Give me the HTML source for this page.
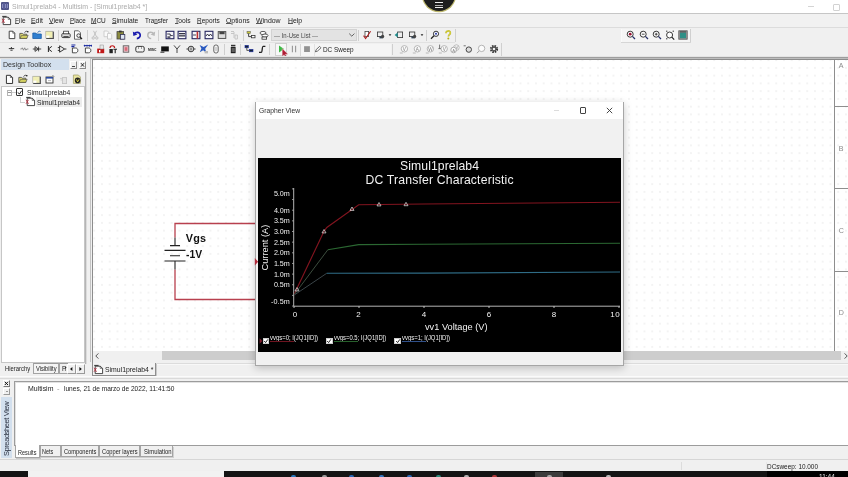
<!DOCTYPE html>
<html>
<head>
<meta charset="utf-8">
<title>Simul1prelab4 - Multisim</title>
<style>
html,body{margin:0;padding:0;overflow:hidden;}
body{width:848px;height:477px;overflow:hidden;background:#f0f0f0;position:relative;font-family:"Liberation Sans","DejaVu Sans",sans-serif;color:#222;}
.a{position:absolute;}
.t{position:absolute;white-space:nowrap;line-height:1;}
.menu u{text-decoration:underline;text-decoration-thickness:0.5px;text-underline-offset:0.2px;text-decoration-color:#555;}
.tab{position:absolute;border:1px solid #a4a4a4;border-top:none;background:#f0f0f0;box-sizing:border-box;}
svg{overflow:visible;}
#root{position:absolute;left:0;top:0;width:848px;height:477px;overflow:hidden;will-change:transform;}
</style>
</head>
<body>
<div id="root">
<!-- title bar -->
<div class="a" style="left:0px;top:0px;width:848px;height:13px;background:#fff;"></div>
<div class="a" style="left:0px;top:13px;width:848px;height:1px;background:#c6c6c6;"></div>
<div class="a" style="left:1.2px;top:2.3px;width:8.2px;height:7.8px;background:#4f5488;border-radius:1px;"></div>
<div class="a" style="left:2.2px;top:4.2px;width:6.2px;height:3.4px;background:#8a8fc0;"></div>
<div class="a" style="left:3.4px;top:3.4px;width:1.2px;height:5.4px;background:#5a5f98;"></div>
<div class="a" style="left:6px;top:3.4px;width:1.2px;height:5.4px;background:#5a5f98;"></div>
<div class="t" style="left:12.3px;top:3px;font-size:7.5px;color:#ababab;transform:scaleX(0.9267);transform-origin:0 50%;">Simul1prelab4 - Multisim - [Simul1prelab4 *]</div>
<div class="a" style="left:422.8px;top:-21.5px;width:32px;height:32px;border-radius:50%;background:#1e1e1e;box-shadow:0 0 0 1.2px #bdb76e;"></div>
<div class="a" style="left:434.5px;top:2.2px;width:8.8px;height:1px;background:#ececec;"></div>
<div class="a" style="left:434.5px;top:4.5px;width:8.8px;height:1px;background:#b0b0b0;"></div>
<div class="a" style="left:434.5px;top:6.8px;width:8.8px;height:1px;background:#ececec;"></div>
<div class="a" style="left:808px;top:6px;width:6px;height:1px;background:#d4d4d4;"></div>
<div class="a" style="left:833px;top:4px;width:5px;height:5px;border:1px solid #d2d2d2;border-radius:1px;"></div>
<!-- menu bar -->
<div class="a" style="left:0px;top:14px;width:848px;height:13px;background:#f1f1f1;"></div>
<div class="a" style="left:0px;top:27px;width:848px;height:1px;background:#dcdcdc;"></div>
<svg class="a" style="left:1px;top:15px;" width="11" height="11" viewBox="0 0 11 11"><path d="M2.2 2.2h5l2.4 2.2v5.2h-7.4z" fill="#fff" stroke="#333" stroke-width="0.9"/><path d="M7.2 2.2v2.2h2.4" fill="none" stroke="#333" stroke-width="0.6"/><path d="M1 3.8l2.6 4M3.6 3.8l-2.6 4" stroke="#b82838" stroke-width="0.8"/><path d="M1.2 1.4h4.4" stroke="#333" stroke-width="1"/></svg>
<div class="t menu" style="left:14.5px;top:17px;font-size:7.5px;color:#1a1a1a;transform:scaleX(0.8682);transform-origin:0 50%;"><u>F</u>ile</div>
<div class="t menu" style="left:31.2px;top:17px;font-size:7.5px;color:#1a1a1a;transform:scaleX(0.9121);transform-origin:0 50%;"><u>E</u>dit</div>
<div class="t menu" style="left:49px;top:17px;font-size:7.5px;color:#1a1a1a;transform:scaleX(0.9178);transform-origin:0 50%;"><u>V</u>iew</div>
<div class="t menu" style="left:69.8px;top:17px;font-size:7.5px;color:#1a1a1a;transform:scaleX(0.8366);transform-origin:0 50%;"><u>P</u>lace</div>
<div class="t menu" style="left:91.4px;top:17px;font-size:7.5px;color:#1a1a1a;transform:scaleX(0.8658);transform-origin:0 50%;"><u>M</u>CU</div>
<div class="t menu" style="left:112.2px;top:17px;font-size:7.5px;color:#1a1a1a;transform:scaleX(0.9011);transform-origin:0 50%;"><u>S</u>imulate</div>
<div class="t menu" style="left:145.1px;top:17px;font-size:7.5px;color:#1a1a1a;transform:scaleX(0.8353);transform-origin:0 50%;">Tra<u>n</u>sfer</div>
<div class="t menu" style="left:174.8px;top:17px;font-size:7.5px;color:#1a1a1a;transform:scaleX(0.8906);transform-origin:0 50%;"><u>T</u>ools</div>
<div class="t menu" style="left:197.4px;top:17px;font-size:7.5px;color:#1a1a1a;transform:scaleX(0.8642);transform-origin:0 50%;"><u>R</u>eports</div>
<div class="t menu" style="left:226.4px;top:17px;font-size:7.5px;color:#1a1a1a;transform:scaleX(0.9165);transform-origin:0 50%;"><u>O</u>ptions</div>
<div class="t menu" style="left:256.2px;top:17px;font-size:7.5px;color:#1a1a1a;transform:scaleX(0.9218);transform-origin:0 50%;"><u>W</u>indow</div>
<div class="t menu" style="left:287.6px;top:17px;font-size:7.5px;color:#1a1a1a;transform:scaleX(0.9134);transform-origin:0 50%;"><u>H</u>elp</div>
<!-- toolbars -->
<div class="a" style="left:454.5px;top:29px;width:1px;height:13px;background:#d0d0d0;"></div>
<div class="a" style="left:620.5px;top:28.5px;width:70px;height:14px;background:#f5f5f5;"></div>
<div class="a" style="left:620.5px;top:29px;width:1px;height:13px;background:#fafafa;"></div>
<div class="a" style="left:690px;top:29px;width:1px;height:13px;background:#d0d0d0;"></div>
<div class="a" style="left:620.5px;top:42px;width:70.5px;height:1px;background:#d6d6d6;"></div>
<div class="a" style="left:0px;top:42px;width:455px;height:1px;background:#e2e2e2;"></div>
<svg class="a" style="left:6.6px;top:30.0px;" width="10" height="10" viewBox="0 0 10 10"><path d="M2.2 1.2h3.6l2 2v5.4h-5.6z" fill="#fff" stroke="#333" stroke-width="0.9"/><path d="M5.8 1.2v2h2" fill="none" stroke="#333" stroke-width="0.6"/></svg>
<svg class="a" style="left:19.0px;top:30.0px;" width="10" height="10" viewBox="0 0 10 10"><path d="M0.8 3.4h2.6l.8.8h3.6v4.3h-7z" fill="#e2dc78" stroke="#444" stroke-width="0.8"/><path d="M1 8.4l1.6-3h6.6l-1.6 3z" fill="#d4d060" stroke="#444" stroke-width="0.6"/><path d="M5.6 2.6c.6-1.2 1.8-1.6 2.8-1.2" fill="none" stroke="#222" stroke-width="0.8"/><circle cx="8.8" cy="1.8" r="0.8" fill="#111"/></svg>
<svg class="a" style="left:32.0px;top:30.0px;" width="10" height="10" viewBox="0 0 10 10"><path d="M0.8 3h3l1 1h4.5v4.5h-8.5z" fill="#2f7fd0" stroke="#1d5fa8" stroke-width="0.8"/><path d="M5.5 2.5l2-1.5 1 1" fill="none" stroke="#1d5fa8" stroke-width="0.8"/></svg>
<svg class="a" style="left:45.0px;top:30.0px;" width="10" height="10" viewBox="0 0 10 10"><rect x="1.2" y="1.6" width="7.6" height="7.4" fill="#333"/><rect x="0.8" y="1.2" width="7" height="6.8" fill="#f1efb4" stroke="#999" stroke-width="0.5"/><rect x="1.4" y="5.6" width="3" height="2.2" fill="#fff"/></svg>
<svg class="a" style="left:61.0px;top:30.0px;" width="10" height="10" viewBox="0 0 10 10"><rect x="0.8" y="3.6" width="8.4" height="4" rx="1" fill="#ddd" stroke="#333" stroke-width="0.9"/><rect x="2.6" y="1.2" width="4.8" height="2.6" fill="#fff" stroke="#333" stroke-width="0.8"/><rect x="2.4" y="6.2" width="5.2" height="1.2" fill="#333"/></svg>
<svg class="a" style="left:73.0px;top:30.0px;" width="10" height="10" viewBox="0 0 10 10"><path d="M1.5 0.8h4l2 2v6.4h-6z" fill="#fff" stroke="#444" stroke-width="0.8"/><circle cx="5.6" cy="5.6" r="1.8" fill="#eee" stroke="#222" stroke-width="0.8"/><path d="M7 7l2 2" stroke="#222" stroke-width="1.2"/></svg>
<svg class="a" style="left:90.0px;top:30.0px;" width="10" height="10" viewBox="0 0 10 10"><path d="M3.5 0.8l3 6M6.5 0.8l-3 6" stroke="#b8b8b8" stroke-width="0.8" fill="none"/><circle cx="3.2" cy="8" r="1.2" fill="none" stroke="#b8b8b8" stroke-width="0.8"/><circle cx="6.8" cy="8" r="1.2" fill="none" stroke="#b8b8b8" stroke-width="0.8"/></svg>
<svg class="a" style="left:103.0px;top:30.0px;" width="10" height="10" viewBox="0 0 10 10"><path d="M1 1h3.5l1.2 1.2v4.5h-4.7z" fill="#fafafa" stroke="#c4c4c4" stroke-width="0.8"/><path d="M4.5 3.4h3l1.2 1.2v4.4h-4.2z" fill="#fafafa" stroke="#c4c4c4" stroke-width="0.8"/></svg>
<svg class="a" style="left:116.0px;top:30.0px;" width="10" height="10" viewBox="0 0 10 10"><rect x="1" y="1.6" width="6.6" height="7.4" fill="#8a8a3e" stroke="#444" stroke-width="0.8"/><rect x="3" y="0.6" width="2.6" height="1.8" fill="#333"/><rect x="4.4" y="4.4" width="4.4" height="4.8" fill="#dfe6f4" stroke="#335" stroke-width="0.8"/></svg>
<svg class="a" style="left:132.0px;top:30.0px;" width="10" height="10" viewBox="0 0 10 10"><path d="M2.2 4.2c1.2-2.6 5.6-2.6 6 .6c.3 2.2-1.4 3.6-3.4 3.8" fill="none" stroke="#1b1cae" stroke-width="1.7"/><path d="M0.8 1.6l0.6 4.4 4-1.4z" fill="#1b1cae"/></svg>
<svg class="a" style="left:146.0px;top:30.0px;" width="10" height="10" viewBox="0 0 10 10"><path d="M7.8 4.2c-1.2-2.6-5.6-2.6-6 .6c-.3 2.2 1.4 3.6 3.4 3.8" fill="none" stroke="#b8b8b8" stroke-width="1.5"/><path d="M9.2 1.6l-0.6 4.4-4-1.4z" fill="#b8b8b8"/></svg>
<svg class="a" style="left:165.0px;top:30.0px;" width="10" height="10" viewBox="0 0 10 10"><rect x="1.1" y="1.3" width="7.8" height="7.4" fill="#f6f6fb" stroke="#26265f" stroke-width="1.1"/><path d="M2.2 4h3v1.6h2.6" stroke="#223" stroke-width="0.9" fill="none"/><rect x="2.4" y="6.4" width="3" height="1.4" fill="#334"/></svg>
<svg class="a" style="left:177.0px;top:30.0px;" width="10" height="10" viewBox="0 0 10 10"><rect x="1.1" y="1.3" width="7.8" height="7.4" fill="#f6f6fb" stroke="#26265f" stroke-width="1.1"/><rect x="2" y="3" width="6" height="1.3" fill="#334"/><rect x="2" y="5.2" width="6" height="1.3" fill="#334"/></svg>
<svg class="a" style="left:191.0px;top:30.0px;" width="10" height="10" viewBox="0 0 10 10"><rect x="1.1" y="1.3" width="7.8" height="7.4" fill="#f6f6fb" stroke="#26265f" stroke-width="1.1"/><rect x="5.6" y="1.6" width="1.6" height="7" fill="#c03030"/><path d="M2 5h3" stroke="#334" stroke-width="0.9"/></svg>
<svg class="a" style="left:204.0px;top:30.0px;" width="10" height="10" viewBox="0 0 10 10"><rect x="1.1" y="1.3" width="7.8" height="7.4" fill="#f6f6fb" stroke="#26265f" stroke-width="1.1"/><path d="M2 6l1.5-2 1.5 2 1.5-2 1.5 2" stroke="#223" stroke-width="0.9" fill="none"/></svg>
<svg class="a" style="left:217.0px;top:30.0px;" width="10" height="10" viewBox="0 0 10 10"><rect x="1.2" y="1.6" width="7.6" height="6.8" fill="#ddd" stroke="#444" stroke-width="0.9"/><rect x="2.4" y="2" width="5.2" height="2.2" fill="#444"/></svg>
<svg class="a" style="left:229.0px;top:30.0px;" width="10" height="10" viewBox="0 0 10 10"><path d="M2 1.5h3M2 3.5h3M5 2v6M6 5h2.4v4h-2.4z" stroke="#c2c2c2" stroke-width="0.9" fill="none"/></svg>
<svg class="a" style="left:246.0px;top:30.0px;" width="10" height="10" viewBox="0 0 10 10"><rect x="1" y="1.4" width="3.4" height="2.2" fill="#c8c83a" stroke="#555" stroke-width="0.5"/><path d="M2.6 3.6v3h3" stroke="#333" stroke-width="0.9" fill="none"/><rect x="5.4" y="5.4" width="3.6" height="2.4" fill="#fff" stroke="#333" stroke-width="0.8"/></svg>
<svg class="a" style="left:259.0px;top:30.0px;" width="10" height="10" viewBox="0 0 10 10"><ellipse cx="4" cy="3" rx="3" ry="1.6" fill="#fff" stroke="#333" stroke-width="0.8"/><ellipse cx="6" cy="5.6" rx="3" ry="1.6" fill="#fff" stroke="#333" stroke-width="0.8"/><rect x="3" y="7" width="4.6" height="2.2" fill="#fff" stroke="#333" stroke-width="0.8"/></svg>
<svg class="a" style="left:361.7px;top:30.0px;" width="10" height="10" viewBox="0 0 10 10"><rect x="3" y="1.4" width="3.6" height="5" fill="#fff" stroke="#444" stroke-width="0.8"/><path d="M1.6 5.6l2 3 5-7.4" stroke="#b02020" stroke-width="1.1" fill="none"/></svg>
<svg class="a" style="left:375.5px;top:30.0px;" width="10" height="10" viewBox="0 0 10 10"><rect x="1.4" y="2" width="5.4" height="4.6" fill="#eee" stroke="#333" stroke-width="0.8"/><path d="M3.4 6.2l3.8 0 0 2.2-3.8 0z" fill="#345"/><circle cx="6.6" cy="6.4" r="1.6" fill="#444"/></svg>
<svg class="a" style="left:384.5px;top:30.0px;" width="10" height="10" viewBox="0 0 10 10"><path d="M3.6 4.2h2.8l-1.4 1.8z" fill="#222"/></svg>
<svg class="a" style="left:394.0px;top:30.0px;" width="10" height="10" viewBox="0 0 10 10"><rect x="3.6" y="2" width="5" height="5.6" fill="#eee" stroke="#333" stroke-width="0.8"/><path d="M0.6 5l3-2.4v4.8z" fill="#1f8f8f"/></svg>
<svg class="a" style="left:408.0px;top:30.0px;" width="10" height="10" viewBox="0 0 10 10"><rect x="1.4" y="2" width="5.4" height="4.6" fill="#eee" stroke="#333" stroke-width="0.8"/><path d="M3.4 6.2l3.8 0 0 2.2-3.8 0z" fill="#345"/><circle cx="6.6" cy="6.4" r="1.6" fill="#444"/></svg>
<svg class="a" style="left:416.5px;top:30.0px;" width="10" height="10" viewBox="0 0 10 10"><path d="M3.6 4.2h2.8l-1.4 1.8z" fill="#222"/></svg>
<svg class="a" style="left:430.0px;top:30.0px;" width="10" height="10" viewBox="0 0 10 10"><circle cx="6" cy="3.8" r="2.6" fill="#f4f6ff" stroke="#222" stroke-width="0.9"/><circle cx="6" cy="3.8" r="1" fill="#2a3aa0"/><path d="M4 5.8l-3 3" stroke="#222" stroke-width="1.3"/></svg>
<svg class="a" style="left:443.0px;top:30.0px;" width="10" height="10" viewBox="0 0 10 10"><path d="M3 3.2c0-3 4.4-3 4.4-.2c0 1.6-2 1.8-2 3.4" fill="none" stroke="#b7b21a" stroke-width="1.6"/><path d="M3 3.2c0-3 4.4-3 4.4-.2c0 1.6-2 1.8-2 3.4" fill="none" stroke="#f0ea60" stroke-width="0.6"/><circle cx="5.3" cy="8.4" r="1" fill="#b7b21a"/></svg>
<svg class="a" style="left:625.8px;top:30.0px;" width="10" height="10" viewBox="0 0 10 10"><circle cx="4.2" cy="4.2" r="3" fill="#fff" stroke="#222" stroke-width="0.9"/><path d="M6.4 6.4l2.6 2.6" stroke="#26306a" stroke-width="1.3"/><circle cx="4.2" cy="4.2" r="1.4" fill="#9a1436"/></svg>
<svg class="a" style="left:638.8px;top:30.0px;" width="10" height="10" viewBox="0 0 10 10"><circle cx="4.2" cy="4.2" r="3" fill="#fff" stroke="#222" stroke-width="0.9"/><path d="M6.4 6.4l2.6 2.6" stroke="#26306a" stroke-width="1.3"/><path d="M2.8 4.2h2.8" stroke="#222" stroke-width="0.8"/></svg>
<svg class="a" style="left:651.8px;top:30.0px;" width="10" height="10" viewBox="0 0 10 10"><circle cx="4.2" cy="4.2" r="3" fill="#fff" stroke="#222" stroke-width="0.9"/><path d="M6.4 6.4l2.6 2.6" stroke="#26306a" stroke-width="1.3"/><path d="M2.8 4.2h2.8M4.2 2.8v2.8" stroke="#222" stroke-width="0.8"/></svg>
<svg class="a" style="left:664.8px;top:30.0px;" width="10" height="10" viewBox="0 0 10 10"><circle cx="4.6" cy="5" r="3" fill="#fff" stroke="#222" stroke-width="0.9"/><path d="M6.8 7.2l2.4 2.4" stroke="#222" stroke-width="1.2"/><path d="M1 1.2h1.4M7.6 1.2h1.4M1 8.8h1.4" stroke="#222" stroke-width="0.9"/></svg>
<svg class="a" style="left:677.8px;top:30.0px;" width="10" height="10" viewBox="0 0 10 10"><rect x="0.8" y="0.8" width="8.4" height="8.4" fill="#9a9a9a" stroke="#555" stroke-width="0.8"/><rect x="2" y="2.6" width="6" height="5.6" fill="#2f8f86"/><rect x="2" y="1.4" width="6" height="1" fill="#444"/></svg>
<div class="a" style="left:58px;top:30px;width:1px;height:11px;background:#cfcfcf;"></div>
<div class="a" style="left:87px;top:30px;width:1px;height:11px;background:#cfcfcf;"></div>
<div class="a" style="left:157.5px;top:30px;width:1px;height:11px;background:#cfcfcf;"></div>
<div class="a" style="left:243px;top:30px;width:1px;height:11px;background:#cfcfcf;"></div>
<div class="a" style="left:358px;top:30px;width:1px;height:11px;background:#cfcfcf;"></div>
<div class="a" style="left:425.5px;top:30px;width:1px;height:11px;background:#cfcfcf;"></div>
<div class="a" style="left:271px;top:29px;width:86px;height:12px;box-sizing:border-box;background:#e3e3e3;border:1px solid #d2d2d2;"></div>
<div class="t" style="left:274px;top:33px;font-size:6.8px;color:#484848;transform:scaleX(0.8828);transform-origin:0 50%;">--- In-Use List ---</div>
<svg class="a" style="left:348px;top:32px;" width="8" height="6" viewBox="0 0 8 6"><path d="M1.2 1.6l2.6 2.6 2.6-2.6" fill="none" stroke="#444" stroke-width="0.8"/></svg>
<div class="a" style="left:300px;top:43.5px;width:91px;height:12.5px;background:#f5f5f5;"></div>
<div class="a" style="left:300px;top:43.5px;width:1px;height:12.5px;background:#d6d6d6;"></div>
<div class="a" style="left:313.5px;top:43.5px;width:1px;height:12.5px;background:#e2e2e2;"></div>
<svg class="a" style="left:6.0px;top:44.0px;" width="10" height="10" viewBox="0 0 10 10"><path d="M5.4 3v1.6M2.8 4.6h5.4M4.4 6.2h2.2" stroke="#222" stroke-width="0.9"/></svg>
<svg class="a" style="left:19.0px;top:44.0px;" width="10" height="10" viewBox="0 0 10 10"><path d="M1.4 5h1.2l.7-1.2 1.2 2.4 1.2-2.4 1.2 2.4 .9-1.2h1.6" stroke="#666" stroke-width="0.7" fill="none"/></svg>
<svg class="a" style="left:32.0px;top:44.0px;" width="10" height="10" viewBox="0 0 10 10"><path d="M0.8 5h8.4M3 2.6v4.8l3.4-2.4zM6.6 2.6v4.8" stroke="#222" stroke-width="0.8" fill="none"/></svg>
<svg class="a" style="left:45.0px;top:44.0px;" width="10" height="10" viewBox="0 0 10 10"><path d="M3.4 2v6M3.4 5l3.4-2.6M3.4 5l3.4 2.6" stroke="#222" stroke-width="1" fill="none"/></svg>
<svg class="a" style="left:57.0px;top:44.0px;" width="10" height="10" viewBox="0 0 10 10"><path d="M2.6 1.8v6.4l5-3.2zM0.8 3.6h1.8M0.8 6.4h1.8M7.6 5h1.8" stroke="#222" stroke-width="0.9" fill="none"/></svg>
<svg class="a" style="left:70.0px;top:44.0px;" width="10" height="10" viewBox="0 0 10 10"><path d="M1.4 1h4M1.4 2.6h3" stroke="#1a2aa0" stroke-width="1.1"/><path d="M2.4 4h3.2c3 0 3 4.8 0 4.8h-3.2z" fill="#fff" stroke="#222" stroke-width="0.8"/></svg>
<svg class="a" style="left:83.0px;top:44.0px;" width="10" height="10" viewBox="0 0 10 10"><path d="M0.8 1.6h8M1.6 0.8v1.8M4 0.8v1.8M6.4 0.8v1.8M8.4 0.8v1.8" stroke="#1a2aa0" stroke-width="1"/><path d="M2.4 4h3.2c3 0 3 4.8 0 4.8h-3.2z" fill="#fff" stroke="#222" stroke-width="0.8"/></svg>
<svg class="a" style="left:96.0px;top:44.0px;" width="10" height="10" viewBox="0 0 10 10"><rect x="1.2" y="4.6" width="7" height="4.6" fill="#c01818"/><rect x="4" y="1" width="3.4" height="4" fill="#e8e8e8" stroke="#888" stroke-width="0.5"/><rect x="3" y="6" width="1.4" height="2.4" fill="#fff"/></svg>
<svg class="a" style="left:108.0px;top:44.0px;" width="10" height="10" viewBox="0 0 10 10"><path d="M2 4c0-3 4.6-3 4.6 0" fill="none" stroke="#c01818" stroke-width="1.2"/><rect x="1.4" y="5" width="3.4" height="4.2" fill="#222"/><path d="M5.4 5.2h3.6M7.2 5.2v4" stroke="#222" stroke-width="1.1"/></svg>
<svg class="a" style="left:121.0px;top:44.0px;" width="10" height="10" viewBox="0 0 10 10"><rect x="2.2" y="1.8" width="5.6" height="6.4" fill="#e9c4ca" stroke="#555" stroke-width="0.8"/><rect x="3.6" y="3.2" width="2.8" height="3.6" fill="#d96a78"/></svg>
<svg class="a" style="left:134.7px;top:44.0px;" width="10" height="10" viewBox="0 0 10 10"><rect x="0.8" y="2.4" width="8.4" height="5.6" rx="1.6" fill="#f4f4f4" stroke="#222" stroke-width="0.9"/><path d="M3 4h1M6 4h1" stroke="#222" stroke-width="0.8"/></svg>
<svg class="a" style="left:160.0px;top:44.0px;" width="10" height="10" viewBox="0 0 10 10"><rect x="1.2" y="2.4" width="7.6" height="5" fill="#111"/><path d="M0.4 8.2h4" stroke="#111" stroke-width="0.9"/></svg>
<svg class="a" style="left:172.0px;top:44.0px;" width="10" height="10" viewBox="0 0 10 10"><path d="M2 1.4l3 3.6 3-3.6M5 5v4" stroke="#333" stroke-width="0.9" fill="none"/></svg>
<svg class="a" style="left:185.7px;top:44.0px;" width="10" height="10" viewBox="0 0 10 10"><path d="M0.4 5h9.2" stroke="#222" stroke-width="0.8"/><circle cx="5" cy="5" r="2.8" fill="#fff" stroke="#222" stroke-width="0.9"/><path d="M4.2 3.4v3.2M5.8 3.4v3.2" stroke="#222" stroke-width="0.7"/></svg>
<svg class="a" style="left:198.8px;top:44.0px;" width="10" height="10" viewBox="0 0 10 10"><path d="M0.6 1l4 2 4.6-2.4-3 4.2 1.2 4.2-3.2-2.8-3.4 2 1.6-3.6z" fill="#2a5ac0"/><path d="M5.6 7h3.4v2.4h-3.4z" fill="#bbb"/></svg>
<svg class="a" style="left:211.0px;top:44.0px;" width="10" height="10" viewBox="0 0 10 10"><rect x="2.8" y="1" width="4.4" height="8" rx="2" fill="#f4f4f4" stroke="#555" stroke-width="0.9"/><path d="M5 3v4" stroke="#999" stroke-width="0.7"/></svg>
<svg class="a" style="left:228.0px;top:44.0px;" width="10" height="10" viewBox="0 0 10 10"><rect x="2.8" y="3" width="4.8" height="6.2" fill="#222"/><rect x="3" y="0.8" width="4.4" height="1.6" fill="#333"/><path d="M3.6 5h3.2M3.6 7h3.2" stroke="#eee" stroke-width="0.6"/></svg>
<svg class="a" style="left:244.0px;top:44.0px;" width="10" height="10" viewBox="0 0 10 10"><rect x="1" y="1.4" width="3.4" height="2.4" fill="#123" stroke="#1a2aa0" stroke-width="0.6"/><path d="M2.8 3.8v2.6h3" stroke="#333" stroke-width="0.8" fill="none"/><rect x="5.4" y="5.4" width="3.6" height="2.4" fill="#123" stroke="#1a2aa0" stroke-width="0.6"/></svg>
<svg class="a" style="left:257.0px;top:44.0px;" width="10" height="10" viewBox="0 0 10 10"><path d="M2 8.4h2.2c1.4 0 .6-6 2-6h2.2" stroke="#222" stroke-width="1.3" fill="none"/></svg>
<svg class="a" style="left:288.8px;top:44.0px;" width="10" height="10" viewBox="0 0 10 10"><path d="M3.4 1.8v6.4M6.6 1.8v6.4" stroke="#969696" stroke-width="1.1"/></svg>
<svg class="a" style="left:302.0px;top:44.0px;" width="10" height="10" viewBox="0 0 10 10"><rect x="2.1" y="2.2" width="5.8" height="5.8" fill="#929292"/></svg>
<svg class="a" style="left:312.8px;top:44.0px;" width="10" height="10" viewBox="0 0 10 10"><path d="M2.4 7.8l.8-2.2 3.4-3.2 1.4 1.4-3.4 3.2z" fill="#fff" stroke="#444" stroke-width="0.8"/></svg>
<svg class="a" style="left:399.0px;top:44.0px;" width="10" height="10" viewBox="0 0 10 10"><circle cx="5.4" cy="4.8" r="3.2" fill="#fbfbfb" stroke="#a4a4a4" stroke-width="0.8"/><text x="5.4" y="6.6" font-size="4.6" text-anchor="middle" fill="#808080" font-family="Liberation Sans, sans-serif">V</text><path d="M0.8 9h3" stroke="#a4a4a4" stroke-width="0.7"/></svg>
<svg class="a" style="left:412.0px;top:44.0px;" width="10" height="10" viewBox="0 0 10 10"><circle cx="5.4" cy="4.8" r="3.2" fill="#fbfbfb" stroke="#a4a4a4" stroke-width="0.8"/><text x="5.4" y="6.6" font-size="4.6" text-anchor="middle" fill="#808080" font-family="Liberation Sans, sans-serif">A</text><path d="M0.8 9h3" stroke="#a4a4a4" stroke-width="0.7"/></svg>
<svg class="a" style="left:425.0px;top:44.0px;" width="10" height="10" viewBox="0 0 10 10"><circle cx="5.4" cy="4.8" r="3.2" fill="#fbfbfb" stroke="#a4a4a4" stroke-width="0.8"/><text x="5.4" y="6.6" font-size="4.6" text-anchor="middle" fill="#808080" font-family="Liberation Sans, sans-serif">W</text><path d="M0.8 9h3" stroke="#a4a4a4" stroke-width="0.7"/></svg>
<svg class="a" style="left:438.0px;top:44.0px;" width="10" height="10" viewBox="0 0 10 10"><path d="M1.6 0.6v4M0.4 4.6h2.6" stroke="#555" stroke-width="0.8"/><circle cx="6.2" cy="4.8" r="3.2" fill="#fbfbfb" stroke="#a4a4a4" stroke-width="0.8"/><text x="6.2" y="6.6" font-size="4.6" text-anchor="middle" fill="#808080" font-family="Liberation Sans, sans-serif">V</text><path d="M0.8 9h3" stroke="#a4a4a4" stroke-width="0.7"/></svg>
<svg class="a" style="left:450.0px;top:44.0px;" width="10" height="10" viewBox="0 0 10 10"><circle cx="6.4" cy="3.6" r="2.8" fill="#fbfbfb" stroke="#aaa" stroke-width="0.8"/><circle cx="3.6" cy="6" r="2.8" fill="#fbfbfb" stroke="#999" stroke-width="0.8"/><text x="3.6" y="7.6" font-size="4.2" text-anchor="middle" fill="#888" font-family="Liberation Sans, sans-serif">A</text><text x="6.8" y="5" font-size="4.2" text-anchor="middle" fill="#888" font-family="Liberation Sans, sans-serif">V</text></svg>
<svg class="a" style="left:463.0px;top:44.0px;" width="10" height="10" viewBox="0 0 10 10"><path d="M0.6 1.8h2.2" stroke="#555" stroke-width="0.8"/><circle cx="5.8" cy="5.6" r="2.7" fill="#dcdcdc" stroke="#444" stroke-width="1"/></svg>
<svg class="a" style="left:476.0px;top:44.0px;" width="10" height="10" viewBox="0 0 10 10"><circle cx="5.6" cy="4.4" r="3.2" fill="#fbfbfb" stroke="#a4a4a4" stroke-width="0.8"/><path d="M3.2 7l-2.4 2.2" stroke="#a4a4a4" stroke-width="1"/></svg>
<svg class="a" style="left:489.0px;top:44.0px;" width="10" height="10" viewBox="0 0 10 10"><circle cx="5" cy="5" r="3.1" fill="none" stroke="#333" stroke-width="2" stroke-dasharray="1.5 0.95"/><circle cx="5" cy="5" r="2.4" fill="#444"/><circle cx="5" cy="5" r="1.3" fill="#f0f0f0"/></svg>
<div class="t" style="left:148.2px;top:48px;font-size:4.4px;color:#222;transform:scaleX(0.7738);transform-origin:0 50%;font-weight:bold;">MISC</div>
<div class="a" style="left:224px;top:44px;width:1px;height:11px;background:#cfcfcf;"></div>
<div class="a" style="left:240.3px;top:44px;width:1px;height:11px;background:#cfcfcf;"></div>
<div class="a" style="left:269.3px;top:44px;width:1px;height:11px;background:#cfcfcf;"></div>
<div class="a" style="left:392px;top:44px;width:1px;height:11px;background:#cfcfcf;"></div>
<div class="a" style="left:501px;top:43px;width:1px;height:13px;background:#d0d0d0;"></div>
<div class="a" style="left:275px;top:43px;width:12px;height:13px;box-sizing:border-box;background:#f7f7f7;border:1px solid #d0d0d0;"></div>
<svg class="a" style="left:276.0px;top:44.0px;" width="10" height="10" viewBox="0 0 10 10"><path d="M3 1.4v7.2l5-3.6z" fill="#3cba45"/></svg>
<svg class="a" style="left:280px;top:46px;" width="10" height="13" viewBox="0 0 10 13"><path d="M2.2 2.6v8l1.9-1.8 1.3 3 1.4-.6-1.3-3h2.6z" fill="#b01c34" stroke="#f4e8e8" stroke-width="0.4"/></svg>
<div class="t" style="left:322.9px;top:46px;font-size:7.5px;color:#222;transform:scaleX(0.8533);transform-origin:0 50%;">DC Sweep</div>
<div class="a" style="left:0px;top:56px;width:848px;height:1px;background:#e4e4e4;"></div>
<div class="a" style="left:0px;top:57px;width:848px;height:1px;background:#9e9e9e;"></div>
<div class="a" style="left:0px;top:58px;width:848px;height:1px;background:#dedede;"></div>
<!-- design toolbox -->
<div class="a" style="left:1px;top:59px;width:68px;height:11px;background:#d3e0ee;"></div>
<div class="t" style="left:2.8px;top:61px;font-size:8px;color:#333;transform:scaleX(0.8834);transform-origin:0 50%;">Design Toolbox</div>
<div class="a" style="left:70px;top:61px;width:7px;height:8px;box-sizing:border-box;border:1px solid #fff;border-right-color:#888;border-bottom-color:#888;"></div>
<div class="a" style="left:72px;top:65.5px;width:3px;height:1px;background:#444;"></div>
<div class="a" style="left:79px;top:61px;width:7px;height:8px;box-sizing:border-box;border:1px solid #fff;border-right-color:#888;border-bottom-color:#888;"></div>
<svg class="a" style="left:80px;top:62px;" width="5" height="6" viewBox="0 0 5 6"><path d="M1 1.2l3 3.4M4 1.2l-3 3.4" stroke="#222" stroke-width="1"/></svg>
<div class="a" style="left:85px;top:72px;width:1px;height:292px;background:#b5b5b5;"></div>
<div class="a" style="left:86px;top:72px;width:1px;height:292px;background:#dcdcdc;"></div>
<svg class="a" style="left:3.6999999999999993px;top:73.8px;" width="11" height="11" viewBox="0 0 10 10"><path d="M2.2 1.2h3.6l2 2v5.4h-5.6z" fill="#fff" stroke="#333" stroke-width="0.9"/><path d="M5.8 1.2v2h2" fill="none" stroke="#333" stroke-width="0.6"/></svg>
<svg class="a" style="left:18.0px;top:74.3px;" width="10" height="10" viewBox="0 0 10 10"><path d="M0.8 3.4h2.6l.8.8h3.6v4.3h-7z" fill="#e2dc78" stroke="#444" stroke-width="0.8"/><path d="M1 8.4l1.6-3h6.6l-1.6 3z" fill="#d4d060" stroke="#444" stroke-width="0.6"/><path d="M5.6 2.6c.6-1.2 1.8-1.6 2.8-1.2" fill="none" stroke="#222" stroke-width="0.8"/><circle cx="8.8" cy="1.8" r="0.8" fill="#111"/></svg>
<svg class="a" style="left:31.5px;top:74.6px;" width="10" height="10" viewBox="0 0 10 10"><rect x="1.2" y="1.6" width="7.6" height="7.4" fill="#333"/><rect x="0.8" y="1.2" width="7" height="6.8" fill="#f1efb4" stroke="#999" stroke-width="0.5"/><rect x="1.4" y="5.6" width="3" height="2.2" fill="#fff"/></svg>
<svg class="a" style="left:45.0px;top:74.3px;" width="10" height="10" viewBox="0 0 10 10"><rect x="1" y="3" width="7" height="6" fill="#fff" stroke="#333" stroke-width="0.9"/><rect x="1" y="3" width="7" height="1.6" fill="#2a4aa0"/><path d="M7.6 1.2l1.4 1.4" stroke="#333" stroke-width="0.7"/><path d="M3 6.6h3" stroke="#888" stroke-width="0.6"/></svg>
<svg class="a" style="left:59.0px;top:74.5px;" width="10" height="10" viewBox="0 0 10 10"><rect x="3.4" y="2.6" width="4.2" height="6" fill="#e4e4e4" stroke="#c0c0c0" stroke-width="0.8"/><path d="M1 3.4h2.4M1.6 5h1.8" stroke="#c0c0c0" stroke-width="0.7"/></svg>
<svg class="a" style="left:72.3px;top:74.2px;" width="10" height="10" viewBox="0 0 10 10"><path d="M1.4 1h5l2 2v6.4h-7z" fill="#e9e4a0" stroke="#9a9a60" stroke-width="0.7"/><circle cx="5.6" cy="6.4" r="2.8" fill="#222"/><path d="M4.4 5.4l1.2 2.4 1.4-2.4" stroke="#e6dc40" stroke-width="0.9" fill="none"/></svg>
<div class="a" style="left:1px;top:86px;width:84px;height:277px;box-sizing:border-box;background:#fff;border:1px solid #c6c6c6;"></div>
<div class="a" style="left:6.8px;top:90.4px;width:3.6px;height:3.4px;border:0.8px solid #b4b4b4;background:#fff;"></div>
<div class="a" style="left:7.9px;top:92.1px;width:2.8px;height:0.8px;background:#999;"></div>
<div class="a" style="left:12.4px;top:92.2px;width:3.4px;height:0.8px;background:#ccc;"></div>
<div class="a" style="left:16.4px;top:88.4px;width:5px;height:5.6px;border:0.9px solid #333;border-radius:1px;background:#fff;"></div>
<svg class="a" style="left:16px;top:88px;" width="8" height="9" viewBox="0 0 8 9"><path d="M2 4.4l1.4 1.8 2.2-3.4" fill="none" stroke="#111" stroke-width="0.9"/></svg>
<div class="t" style="left:27px;top:89px;font-size:7.5px;color:#222;transform:scaleX(0.9051);transform-origin:0 50%;">Simul1prelab4</div>
<div class="a" style="left:20px;top:97px;width:1px;height:6px;background:#d0d0d0;"></div>
<div class="a" style="left:20px;top:102px;width:5px;height:1px;background:#d0d0d0;"></div>
<svg class="a" style="left:25px;top:96.3px;" width="11" height="11" viewBox="0 0 11 11"><path d="M2.2 2.2h5l2.4 2.2v5.2h-7.4z" fill="#fff" stroke="#333" stroke-width="0.9"/><path d="M7.2 2.2v2.2h2.4" fill="none" stroke="#333" stroke-width="0.6"/><path d="M1 3.8l2.6 4M3.6 3.8l-2.6 4" stroke="#b82838" stroke-width="0.8"/><path d="M1.2 1.4h4.4" stroke="#333" stroke-width="1"/></svg>
<div class="a" style="left:36px;top:97px;width:46px;height:10px;background:#ededed;"></div>
<div class="t" style="left:37.4px;top:99px;font-size:7.5px;color:#222;transform:scaleX(0.8988);transform-origin:0 50%;">Simul1prelab4</div>
<div class="t" style="left:4.7px;top:366px;font-size:6.5px;color:#222;transform:scaleX(0.9025);transform-origin:0 50%;">Hierarchy</div>
<div class="tab" style="left:32.5px;top:363px;width:26px;border-top:1px solid #9a9a9a;height:11px;background:#f4f4f4;"></div>
<div class="t" style="left:35.5px;top:366px;font-size:6.5px;color:#222;transform:scaleX(0.8776);transform-origin:0 50%;">Visibility</div>
<div class="tab" style="left:58.5px;top:363px;width:9px;border-top:1px solid #9a9a9a;height:11px;border-right:none;"></div>
<div class="t" style="left:61.9px;top:366px;font-size:6.5px;color:#222;letter-spacing:-1.8px;">Pr</div>
<div class="a" style="left:67px;top:364px;width:9px;height:10px;box-sizing:border-box;border:1px solid #fff;border-right-color:#999;border-bottom-color:#999;background:#f0f0f0;"></div>
<div class="a" style="left:76px;top:364px;width:9px;height:10px;box-sizing:border-box;border:1px solid #fff;border-right-color:#999;border-bottom-color:#999;background:#f0f0f0;"></div>
<svg class="a" style="left:69px;top:366px;" width="5" height="6" viewBox="0 0 5 6"><path d="M3.4 1v4l-2.4-2z" fill="#111"/></svg>
<svg class="a" style="left:78px;top:366px;" width="5" height="6" viewBox="0 0 5 6"><path d="M1.4 1v4l2.4-2z" fill="#111"/></svg>
<!-- schematic canvas -->
<div class="a" style="left:90px;top:58px;width:758px;height:304px;background:#f0f0f0;"></div>
<div class="a" style="left:90px;top:58px;width:758px;height:1px;background:#bcbcbc;"></div>
<div class="a" style="left:90px;top:58px;width:1px;height:304px;background:#c4c4c4;"></div>
<div class="a" style="left:92px;top:59px;width:756px;height:1px;background:#8c8c8c;"></div>
<div class="a" style="left:92px;top:59px;width:1px;height:304px;background:#8c8c8c;"></div>
<div class="a" style="left:93px;top:60px;width:755px;height:291px;background:#fff;"></div>
<div class="a" style="left:93px;top:60px;width:755px;height:290px;background-image:radial-gradient(circle,#e9e9e9 0.5px,rgba(255,255,255,0) 0.9px);background-size:7.75px 7.75px;background-position:-2.68px -3.72px;"></div>
<div class="a" style="left:833.6px;top:60px;width:1.1px;height:290.5px;background:#8e8e8e;"></div>
<div class="a" style="left:834px;top:105.8px;width:14px;height:1px;background:#8e8e8e;"></div>
<div class="a" style="left:834px;top:188px;width:14px;height:1px;background:#8e8e8e;"></div>
<div class="a" style="left:834px;top:270.8px;width:14px;height:1px;background:#8e8e8e;"></div>
<div class="t" style="left:838.8px;top:63px;font-size:7.1px;color:#8a8a8a;letter-spacing:0.866px;">A</div>
<div class="t" style="left:838.8px;top:146px;font-size:7.1px;color:#8a8a8a;letter-spacing:0.885px;">B</div>
<div class="t" style="left:838.8px;top:228px;font-size:7.1px;color:#8a8a8a;letter-spacing:0.475px;">C</div>
<div class="t" style="left:838.8px;top:310px;font-size:7.1px;color:#8a8a8a;letter-spacing:0.475px;">D</div>
<svg class="a" style="left:0px;top:0px;" width="848" height="477" viewBox="0 0 848 477"><path d="M175 237.5V223.5H256M175 269.5V299.5H256" fill="none" stroke="#b8404e" stroke-width="1.3"/><path d="M175 237.5V245.6M175 261V269.5M170 245.6H180M164.5 250.4H185.5M170 255.7H180M164.5 261H185.5" fill="none" stroke="#222" stroke-width="1.1"/></svg>
<div class="t" style="left:185.7px;top:233px;font-size:10.8px;color:#111;letter-spacing:0.244px;font-weight:bold;">Vgs</div>
<div class="t" style="left:185.7px;top:249px;font-size:10.8px;color:#111;transform:scaleX(0.9576);transform-origin:0 50%;font-weight:bold;">-1V</div>
<div class="a" style="left:93px;top:351px;width:755px;height:10px;background:#f0f0f0;"></div>
<div class="a" style="left:162px;top:350.6px;width:678.5px;height:9px;background:#cdcdcd;"></div>
<svg class="a" style="left:94px;top:352px;" width="6" height="8" viewBox="0 0 6 8"><path d="M4.4 1.4l-2.6 2.6 2.6 2.6" fill="none" stroke="#444" stroke-width="0.9"/></svg>
<svg class="a" style="left:842.5px;top:352px;" width="6" height="8" viewBox="0 0 6 8"><path d="M1.6 1.4l2.6 2.6-2.6 2.6" fill="none" stroke="#444" stroke-width="0.9"/></svg>
<div class="a" style="left:92px;top:362.5px;width:756px;height:1px;background:#dcdcdc;"></div>
<div class="a" style="left:92px;top:363.5px;width:756px;height:1px;background:#f8f8f8;"></div>
<div class="a" style="left:92px;top:363px;width:63.5px;height:12.8px;box-sizing:border-box;background:#f3f3f3;border:1px solid #8e8e8e;border-top:none;box-shadow:1px 1px 0 #c8c8c8;"></div>
<svg class="a" style="left:93px;top:363.6px;" width="11" height="11" viewBox="0 0 11 11"><path d="M2.2 2.2h5l2.4 2.2v5.2h-7.4z" fill="#fff" stroke="#333" stroke-width="0.9"/><path d="M7.2 2.2v2.2h2.4" fill="none" stroke="#333" stroke-width="0.6"/><path d="M1 3.8l2.6 4M3.6 3.8l-2.6 4" stroke="#b82838" stroke-width="0.8"/><path d="M1.2 1.4h4.4" stroke="#333" stroke-width="1"/></svg>
<div class="t" style="left:104.7px;top:366px;font-size:7.5px;color:#222;transform:scaleX(0.9159);transform-origin:0 50%;">Simul1prelab4 *</div>
<!-- spreadsheet view -->
<div class="a" style="left:0px;top:376px;width:848px;height:1px;background:#fbfbfb;"></div>
<div class="a" style="left:0px;top:378px;width:848px;height:1px;background:#dadada;"></div>
<div class="a" style="left:3px;top:380px;width:7px;height:7px;box-sizing:border-box;border:1px solid #fff;border-right-color:#777;border-bottom-color:#777;"></div>
<svg class="a" style="left:4px;top:381px;" width="5" height="5" viewBox="0 0 5 5"><path d="M0.8 0.8l3.2 3.2M4 0.8l-3.2 3.2" stroke="#111" stroke-width="1"/></svg>
<div class="a" style="left:3px;top:388px;width:7px;height:7px;box-sizing:border-box;border:1px solid #fff;border-right-color:#999;border-bottom-color:#999;"></div>
<div class="a" style="left:6px;top:391px;width:2px;height:1px;background:#999;"></div>
<div class="a" style="left:1px;top:396.5px;width:10.7px;height:61px;background:#d3e0ee;"></div>
<div class="t" style="left:-21.42px;top:425.1px;width:54.69999999999999px;font-size:7.5px;color:#2a3040;letter-spacing:-0.403px;transform:rotate(-90deg);">Spreadsheet View</div>
<div class="a" style="left:14px;top:381px;width:836px;height:65px;box-sizing:border-box;background:#fff;border:1px solid #9c9c9c;box-shadow:inset 1px 1px 0 #e2e2e2;"></div>
<div class="t" style="left:27.6px;top:385px;font-size:7.5px;color:#222;transform:scaleX(0.9236);transform-origin:0 50%;">Multisim</div>
<div class="t" style="left:57px;top:385px;font-size:7.5px;color:#999;letter-spacing:-0.5px;">-</div>
<div class="t" style="left:63.7px;top:385px;font-size:7.5px;color:#222;transform:scaleX(0.8776);transform-origin:0 50%;">lunes, 21 de marzo de 2022, 11:41:50</div>
<div class="tab" style="left:15px;top:445px;width:25px;height:13px;background:#fff;box-shadow:1px 1px 0 #c8c8c8;"></div>
<div class="t" style="left:17.6px;top:450px;font-size:6.5px;color:#222;transform:scaleX(0.8484);transform-origin:0 50%;">Results</div>
<div class="tab" style="left:40px;top:446px;width:21px;height:10.5px;box-shadow:1px 1px 0 #d0d0d0;"></div>
<div class="t" style="left:41.8px;top:449px;font-size:6.5px;color:#222;transform:scaleX(0.8374);transform-origin:0 50%;">Nets</div>
<div class="tab" style="left:61px;top:446px;width:38px;height:10.5px;box-shadow:1px 1px 0 #d0d0d0;"></div>
<div class="t" style="left:63.7px;top:449px;font-size:6.5px;color:#222;transform:scaleX(0.8763);transform-origin:0 50%;">Components</div>
<div class="tab" style="left:99px;top:446px;width:41px;height:10.5px;box-shadow:1px 1px 0 #d0d0d0;"></div>
<div class="t" style="left:102px;top:449px;font-size:6.5px;color:#222;transform:scaleX(0.8797);transform-origin:0 50%;">Copper layers</div>
<div class="tab" style="left:140px;top:446px;width:33px;height:10.5px;box-shadow:1px 1px 0 #d0d0d0;"></div>
<div class="t" style="left:143.5px;top:449px;font-size:6.5px;color:#222;transform:scaleX(0.9058);transform-origin:0 50%;">Simulation</div>
<!-- status bar -->
<div class="a" style="left:0px;top:459px;width:848px;height:1px;background:#d6d6d6;"></div>
<div class="a" style="left:0px;top:460px;width:848px;height:11px;background:#f0f0f0;"></div>
<div class="a" style="left:681px;top:462px;width:1px;height:8px;background:#dcdcdc;"></div>
<div class="a" style="left:766px;top:462px;width:1px;height:8px;background:#e6e6e6;"></div>
<div class="t" style="left:767px;top:464px;font-size:6.8px;color:#222;transform:scaleX(0.9439);transform-origin:0 50%;">DCsweep: 10.000</div>
<!-- taskbar -->
<div class="a" style="left:0px;top:471px;width:848px;height:6px;background:#141414;"></div>
<div class="a" style="left:767px;top:471px;width:81px;height:6px;background:#000;"></div>
<div class="a" style="left:28px;top:471px;width:196px;height:6px;background:#f2f2f2;"></div>
<div class="a" style="left:535px;top:472px;width:28px;height:5px;background:#3c3c3c;"></div>
<div class="a" style="left:291px;top:475px;width:5px;height:2px;background:#2a7ac0;border-radius:2px 2px 0 0;"></div>
<div class="a" style="left:322px;top:475px;width:5px;height:2px;background:#9a9a9a;border-radius:2px 2px 0 0;"></div>
<div class="a" style="left:349px;top:475px;width:5px;height:2px;background:#2a68b8;border-radius:2px 2px 0 0;"></div>
<div class="a" style="left:379px;top:475px;width:5px;height:2px;background:#3476c0;border-radius:2px 2px 0 0;"></div>
<div class="a" style="left:407px;top:475px;width:5px;height:2px;background:#2a68b8;border-radius:2px 2px 0 0;"></div>
<div class="a" style="left:436px;top:475px;width:5px;height:2px;background:#2a8a7a;border-radius:2px 2px 0 0;"></div>
<div class="a" style="left:464px;top:475px;width:5px;height:2px;background:#b0b0b0;border-radius:2px 2px 0 0;"></div>
<div class="a" style="left:492px;top:475px;width:5px;height:2px;background:#b03838;border-radius:2px 2px 0 0;"></div>
<div class="a" style="left:547px;top:475px;width:5px;height:2px;background:#a8a8a8;border-radius:2px 2px 0 0;"></div>
<div class="a" style="left:606px;top:475px;width:5px;height:2px;background:#b8b8b8;border-radius:2px 2px 0 0;"></div>
<div class="t " style="left:819px;top:473.5px;font-size:6.5px;color:#e8e8e8;">11:44</div>
<!-- grapher view window -->
<div class="a" style="left:254.5px;top:101.6px;width:369px;height:264.5px;box-sizing:border-box;background:#f1f1f1;border:1px solid #a6a6a6;box-shadow:0 2px 8px rgba(0,0,0,0.22);"></div>
<div class="a" style="left:256px;top:102px;width:367px;height:17px;background:#fff;"></div>
<div class="t" style="left:259px;top:107px;font-size:7.5px;color:#333;transform:scaleX(0.8968);transform-origin:0 50%;">Grapher View</div>
<div class="a" style="left:554px;top:110px;width:5px;height:1px;background:#dcdcdc;"></div>
<div class="a" style="left:579.5px;top:107px;width:4.6px;height:4.6px;border:1px solid #444;border-radius:1px;"></div>
<svg class="a" style="left:606px;top:107px;" width="7" height="7" viewBox="0 0 7 7"><path d="M0.8 0.8l5.4 5.4M6.2 0.8l-5.4 5.4" stroke="#333" stroke-width="0.9"/></svg>
<div class="a" style="left:257.7px;top:158px;width:363.3px;height:193.6px;background:#000;"></div>
<div class="t" style="left:400px;top:160px;font-size:12.2px;color:#f2f2f2;letter-spacing:0.09px;">Simul1prelab4</div>
<div class="t" style="left:365.5px;top:174px;font-size:12.2px;color:#f2f2f2;letter-spacing:0.181px;">DC Transfer Characteristic</div>
<svg class="a" style="left:0px;top:0px;" width="848" height="477" viewBox="0 0 848 477"><path d="M293.7 188V306.2H620" fill="none" stroke="#b4b4b4" stroke-width="1"/><path d="M292 188.9h1.7" stroke="#b4b4b4" stroke-width="0.8"/><path d="M292 199.55h1.7" stroke="#b4b4b4" stroke-width="0.8"/><path d="M292 210.2h1.7" stroke="#b4b4b4" stroke-width="0.8"/><path d="M292 220.85h1.7" stroke="#b4b4b4" stroke-width="0.8"/><path d="M292 231.5h1.7" stroke="#b4b4b4" stroke-width="0.8"/><path d="M292 242.15h1.7" stroke="#b4b4b4" stroke-width="0.8"/><path d="M292 252.8h1.7" stroke="#b4b4b4" stroke-width="0.8"/><path d="M292 263.45h1.7" stroke="#b4b4b4" stroke-width="0.8"/><path d="M292 274.1h1.7" stroke="#b4b4b4" stroke-width="0.8"/><path d="M292 284.75h1.7" stroke="#b4b4b4" stroke-width="0.8"/><path d="M292 295.4h1.7" stroke="#b4b4b4" stroke-width="0.8"/><path d="M292 306.05h1.7" stroke="#b4b4b4" stroke-width="0.8"/><path d="M294 306v2" stroke="#bdbdbd" stroke-width="1"/><path d="M359 306v2" stroke="#bdbdbd" stroke-width="1"/><path d="M424 306v2" stroke="#bdbdbd" stroke-width="1"/><path d="M489 306v2" stroke="#bdbdbd" stroke-width="1"/><path d="M554 306v2" stroke="#bdbdbd" stroke-width="1"/><path d="M619 306v2" stroke="#bdbdbd" stroke-width="1"/><path d="M294.3 294L324 231.3 326.8 227.5 358.7 204.8 424 204 620 202.3" fill="none" stroke="#82141f" stroke-width="1.15"/><path d="M294.3 294.5L327.8 249.8" fill="none" stroke="#3c4c3e" stroke-width="1"/><path d="M327.8 249.8L358.7 244.6 424 244.3 620 243.2" fill="none" stroke="#2b6832" stroke-width="1.1"/><path d="M294.3 295L326.7 273.3" fill="none" stroke="#3a4448" stroke-width="1"/><path d="M326.7 273.3L424 273.1 620 272" fill="none" stroke="#2f6c86" stroke-width="1.1"/><path d="M297 287.5l2 3.4h-4z" fill="none" stroke="#e8e8e8" stroke-width="0.7"/><path d="M324 229.5l2 3.4h-4z" fill="none" stroke="#e8e8e8" stroke-width="0.7"/><path d="M352 207l2 3.4h-4z" fill="none" stroke="#e8e8e8" stroke-width="0.7"/><path d="M379 202.5l2 3.4h-4z" fill="none" stroke="#e8e8e8" stroke-width="0.7"/><path d="M406 202.3l2 3.4h-4z" fill="none" stroke="#e8e8e8" stroke-width="0.7"/><path d="M254.8 258l3.3 3.8-3.3 3.8z" fill="#b02a3a"/><path d="M259.6 338.2l2.8 2.8-2.8 2.8z" fill="#7c1c2c"/></svg>
<div class="t" style="left:273.9px;top:190px;font-size:7.2px;color:#f2f2f2;letter-spacing:-0.028px;">5.0m</div>
<div class="t" style="left:273.9px;top:207px;font-size:7.2px;color:#f2f2f2;letter-spacing:-0.028px;">4.0m</div>
<div class="t" style="left:273.9px;top:217px;font-size:7.2px;color:#f2f2f2;letter-spacing:-0.028px;">3.5m</div>
<div class="t" style="left:273.9px;top:228px;font-size:7.2px;color:#f2f2f2;letter-spacing:-0.028px;">3.0m</div>
<div class="t" style="left:273.9px;top:239px;font-size:7.2px;color:#f2f2f2;letter-spacing:-0.028px;">2.5m</div>
<div class="t" style="left:273.9px;top:249px;font-size:7.2px;color:#f2f2f2;letter-spacing:-0.028px;">2.0m</div>
<div class="t" style="left:273.9px;top:260px;font-size:7.2px;color:#f2f2f2;letter-spacing:-0.028px;">1.5m</div>
<div class="t" style="left:273.9px;top:271px;font-size:7.2px;color:#f2f2f2;letter-spacing:-0.028px;">1.0m</div>
<div class="t" style="left:273.9px;top:281px;font-size:7.2px;color:#f2f2f2;letter-spacing:-0.028px;">0.5m</div>
<div class="t" style="left:271px;top:298px;font-size:7.2px;color:#f2f2f2;letter-spacing:0.106px;">-0.5m</div>
<div class="t" style="left:242.81px;top:242.85px;width:45.70000000000002px;font-size:9.2px;color:#f2f2f2;letter-spacing:0.026px;transform:rotate(-90deg);">Current (A)</div>
<div class="t" style="left:292.8px;top:311px;font-size:8px;color:#f2f2f2;letter-spacing:-0.053px;">0</div>
<div class="t" style="left:356.3px;top:311px;font-size:8px;color:#f2f2f2;letter-spacing:-0.053px;">2</div>
<div class="t" style="left:421.8px;top:311px;font-size:8px;color:#f2f2f2;letter-spacing:-0.053px;">4</div>
<div class="t" style="left:486.8px;top:311px;font-size:8px;color:#f2f2f2;letter-spacing:-0.053px;">6</div>
<div class="t" style="left:551.8px;top:311px;font-size:8px;color:#f2f2f2;letter-spacing:-0.053px;">8</div>
<div class="t" style="left:610.3px;top:311px;font-size:8px;color:#f2f2f2;letter-spacing:0.394px;">10</div>
<div class="t" style="left:425.3px;top:322px;font-size:9.4px;color:#f2f2f2;transform:scaleX(0.983);transform-origin:0 50%;">vv1 Voltage (V)</div>
<div class="a" style="left:262.5px;top:337.9px;width:6.4px;height:6.2px;box-sizing:border-box;background:#fff;border:0.6px solid #ccc;"></div>
<svg class="a" style="left:262.7px;top:337.9px;" width="6" height="6" viewBox="0 0 6 6"><path d="M1.2 3l1.4 1.6 2.2-3.2" fill="none" stroke="#111" stroke-width="0.9"/></svg>
<div class="t" style="left:270.4px;top:335px;font-size:6.5px;color:#f2f2f2;transform:scaleX(0.9113);transform-origin:0 50%;">vvgs=0; I(JQ1[ID])</div>
<div class="a" style="left:270.4px;top:341px;width:24px;height:1px;background:#6e1420;"></div>
<div class="a" style="left:326.2px;top:337.9px;width:6.4px;height:6.2px;box-sizing:border-box;background:#fff;border:0.6px solid #ccc;"></div>
<svg class="a" style="left:326.4px;top:337.9px;" width="6" height="6" viewBox="0 0 6 6"><path d="M1.2 3l1.4 1.6 2.2-3.2" fill="none" stroke="#111" stroke-width="0.9"/></svg>
<div class="t" style="left:334px;top:335px;font-size:6.5px;color:#f2f2f2;transform:scaleX(0.9002);transform-origin:0 50%;">vvgs=0.5; I(JQ1[ID])</div>
<div class="a" style="left:334px;top:341px;width:24px;height:1px;background:#28602c;"></div>
<div class="a" style="left:394.3px;top:337.9px;width:6.4px;height:6.2px;box-sizing:border-box;background:#fff;border:0.6px solid #ccc;"></div>
<svg class="a" style="left:394.5px;top:337.9px;" width="6" height="6" viewBox="0 0 6 6"><path d="M1.2 3l1.4 1.6 2.2-3.2" fill="none" stroke="#111" stroke-width="0.9"/></svg>
<div class="t" style="left:402px;top:335px;font-size:6.5px;color:#f2f2f2;transform:scaleX(0.9132);transform-origin:0 50%;">vvgs=1; I(JQ1[ID])</div>
<div class="a" style="left:402px;top:341px;width:24px;height:1px;background:#30508a;"></div>
</div>
</body>
</html>
